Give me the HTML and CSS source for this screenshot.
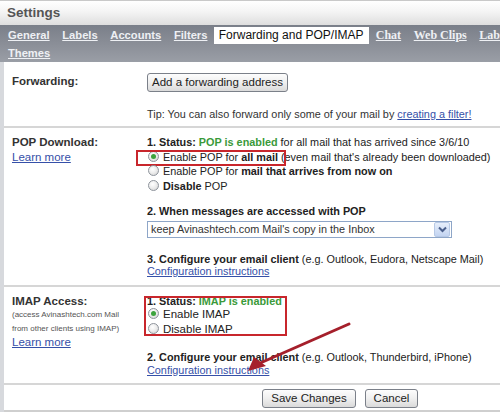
FILE: index.html
```html
<!DOCTYPE html>
<html>
<head>
<meta charset="utf-8">
<title>Settings</title>
<link rel="stylesheet" href="styles.css">
</head>
<body>
<div class="page">
  <div class="head">Settings</div>
  <nav class="tabs">
    <div class="tabrow">
      <a class="tab">General</a>
      <a class="tab">Labels</a>
      <a class="tab">Accounts</a>
      <a class="tab">Filters</a>
      <span class="tab active">Forwarding and POP/IMAP</span>
      <a class="tab serif">Chat</a>
      <a class="tab serif">Web Clips</a>
      <a class="tab serif">Labs</a>
    </div>
    <div class="tabrow row2">
      <a class="tab">Themes</a>
    </div>
  </nav>
  <main class="content">
    <section class="sec sec-fwd">
      <div class="lbl"><div class="title fwd-title">Forwarding:</div></div>
      <div class="val">
        <div><span class="btn btn-fwd">Add a forwarding address</span></div>
        <p class="tip">Tip: You can also forward only some of your mail by <a class="link">creating a filter!</a></p>
      </div>
    </section>

    <section class="sec sec-pop">
      <div class="lbl">
        <div class="title">POP Download:</div>
        <a class="link">Learn more</a>
      </div>
      <div class="val">
        <div class="line"><b>1. Status: <span class="green">POP is enabled</span></b> for all mail that has arrived since 3/6/10</div>
        <div class="line"><span class="hl"><span class="radio on"></span>Enable POP for <b>all mail</b></span> (even mail that's already been downloaded)</div>
        <div class="line"><span class="radio"></span>Enable POP for <b>mail that arrives from now on</b></div>
        <div class="line"><span class="radio"></span><b>Disable</b> POP</div>
        <div class="line step"><b>2. When messages are accessed with POP</b></div>
        <div class="select">
          <span class="sel-text">keep Avinashtech.com Mail's copy in the Inbox</span>
          <span class="sel-btn"><svg width="9" height="7" viewBox="0 0 9 7"><path d="M1 1.5 L4.5 5 L8 1.5" fill="none" stroke="#4a5f8c" stroke-width="2"/></svg></span>
        </div>
        <div class="line step2"><b>3. Configure your email client</b> (e.g. Outlook, Eudora, Netscape Mail)</div>
        <div class="line cfg"><a class="link">Configuration instructions</a></div>
      </div>
    </section>

    <section class="sec sec-imap">
      <div class="lbl">
        <div class="title">IMAP Access:</div>
        <div class="small">(access Avinashtech.com Mail<br>from other clients using IMAP)</div>
        <a class="link">Learn more</a>
      </div>
      <div class="val">
        <div class="hlbox">
          <div class="line"><b>1. Status: <span class="green">IMAP is enabled</span></b></div>
          <div class="line big first"><span class="radio on"></span>Enable IMAP</div>
          <div class="line big"><span class="radio"></span>Disable IMAP</div>
        </div>
        <div class="line step"><b>2. Configure your email client</b> (e.g. Outlook, Thunderbird, iPhone)</div>
        <div class="line cfg"><a class="link">Configuration instructions</a></div>
      </div>
    </section>

    <div class="actions">
      <span class="btn btn-save">Save Changes</span>
      <span class="btn btn-cancel">Cancel</span>
    </div>
  </main>
  <svg class="arrow" width="500" height="414" viewBox="0 0 500 414">
    <line x1="349" y1="324" x2="258" y2="364" stroke="#a51f2b" stroke-width="3" stroke-linecap="round"/>
    <polygon points="248,371 254,357 266,366" fill="#a51f2b"/>
  </svg>
</div>
</body>
</html>
```

FILE: styles.css
```css
html, body {
  margin: 0;
  padding: 0;
  background: #fff;
}
body {
  font-family: "Liberation Sans", Arial, sans-serif;
  font-size: 10.85px;
  color: #222;
}
.page {
  position: relative;
  width: 500px;
  height: 414px;
  overflow: hidden;
}
.head {
  height: 24px;
  border-top: 1px solid #c9c9c9;
  background: linear-gradient(to bottom, #ffffff 0%, #f4f4f4 45%, #dedede 100%);
  color: #555;
  font-weight: bold;
  font-size: 13.5px;
  line-height: 24px;
  padding-left: 7px;
}
.tabs {
  height: 37px;
  background: linear-gradient(to bottom, #7a7f89 0%, #8a8e97 50%, #9a9ea6 100%);
}
.tabrow {
  display: flex;
  white-space: nowrap;
  padding-top: 2px;
  padding-left: 1.7px;
  height: 17px;
}
.tabrow.row2 {
  padding-top: 1px;
  height: 17px;
}
.tab {
  display: block;
  padding: 0 6.3px;
  line-height: 17px;
  font-size: 11.2px;
  font-weight: bold;
  color: #eef0f4;
  text-decoration: underline;
  flex: none;
}
.tab.serif {
  font-family: "Liberation Serif", "Times New Roman", serif;
  font-size: 12px;
}
.tab.active {
  background: #fff;
  color: #111;
  font-weight: normal;
  font-size: 12px;
  text-decoration: none;
  padding: 0 6px 0 5px;
}
.content {
  border-left: 4px solid #d7d9dd;
}
.sec {
  display: grid;
  grid-template-columns: 135px 1fr;
  padding-left: 8px;
  border-bottom: 2px solid #d6d6d6;
}
.title {
  font-weight: bold;
  font-size: 11.5px;
  color: #333;
  line-height: 14.5px;
}
.fwd-title {
  padding-top: 1px;
}
.link {
  color: #3550a8;
  text-decoration: underline;
}
.lbl .link {
  font-size: 11.5px;
  line-height: 14.5px;
}
.small {
  font-size: 8px;
  color: #555;
  line-height: 13.5px;
}
.sec-fwd {
  padding-top: 11px;
  padding-bottom: 4px;
}
.tip {
  margin: 15px 0 0;
  line-height: 15px;
  color: #333;
}
.sec-pop {
  padding-top: 7px;
  padding-bottom: 6px;
}
.sec-imap {
  padding-top: 7px;
  padding-bottom: 6px;
}
.line {
  line-height: 14.5px;
  white-space: nowrap;
}
.line b {
  color: #222;
}
.line.big {
  font-size: 11.5px;
}
.line.big.first {
  margin-top: -1px;
}
.cfg {
  margin-top: -2px;
}
.step {
  margin-top: 11px;
}
.sec-imap .step {
  margin-top: 14px;
}
.step2 {
  margin-top: 14px;
}
.green {
  color: #3a9a3a;
}
.radio {
  display: inline-block;
  box-sizing: border-box;
  width: 11px;
  height: 11px;
  border: 1px solid #8e949c;
  border-radius: 50%;
  background: radial-gradient(circle at 40% 35%, #ffffff 0%, #eeeeee 45%, #cfcfcf 100%);
  vertical-align: -1px;
  margin-right: 4px;
  margin-left: 1px;
  position: relative;
}
.radio.on::after {
  content: "";
  position: absolute;
  left: 2px;
  top: 2px;
  width: 5px;
  height: 5px;
  border-radius: 50%;
  background: #3da33d;
}
.hl {
  position: relative;
}
.hl::after {
  content: "";
  position: absolute;
  left: -11px;
  right: -8px;
  top: -1px;
  bottom: -3px;
  border: 2px solid #c8262c;
}
.hlbox {
  position: relative;
}
.hlbox::after {
  content: "";
  position: absolute;
  left: -3px;
  width: 143px;
  box-sizing: border-box;
  top: 2px;
  bottom: 0;
  border: 2px solid #c8262c;
}
.select {
  display: flex;
  align-items: center;
  box-sizing: border-box;
  width: 305px;
  height: 17px;
  margin-top: 2px;
  border: 1px solid #8ea6c8;
  background: #fff;
}
.sel-text {
  flex: 1;
  padding-left: 3px;
  color: #333;
  white-space: nowrap;
}
.sel-btn {
  display: flex;
  align-items: center;
  justify-content: center;
  width: 14px;
  height: 13px;
  margin-right: 1px;
  border: 1px solid #b7c9e6;
  border-radius: 2px;
  background: linear-gradient(to bottom, #e6eefb, #c3d4f1);
}
.btn {
  display: inline-block;
  box-sizing: border-box;
  height: 19px;
  line-height: 17px;
  border: 1px solid #7b8089;
  border-radius: 3px;
  background: linear-gradient(to bottom, #fdfdfd 0%, #efefef 50%, #dadada 100%);
  font-size: 11.5px;
  color: #222;
  text-align: center;
  white-space: nowrap;
}
.btn-fwd {
  width: 141px;
}
.actions {
  display: flex;
  gap: 9px;
  padding: 4px 0 0 258px;
  height: 21px;
  border-bottom: 2px solid #cfcfcf;
}
.btn-save {
  width: 94px;
}
.btn-cancel {
  width: 53px;
}
.arrow {
  position: absolute;
  left: 0;
  top: 0;
  pointer-events: none;
}
```
